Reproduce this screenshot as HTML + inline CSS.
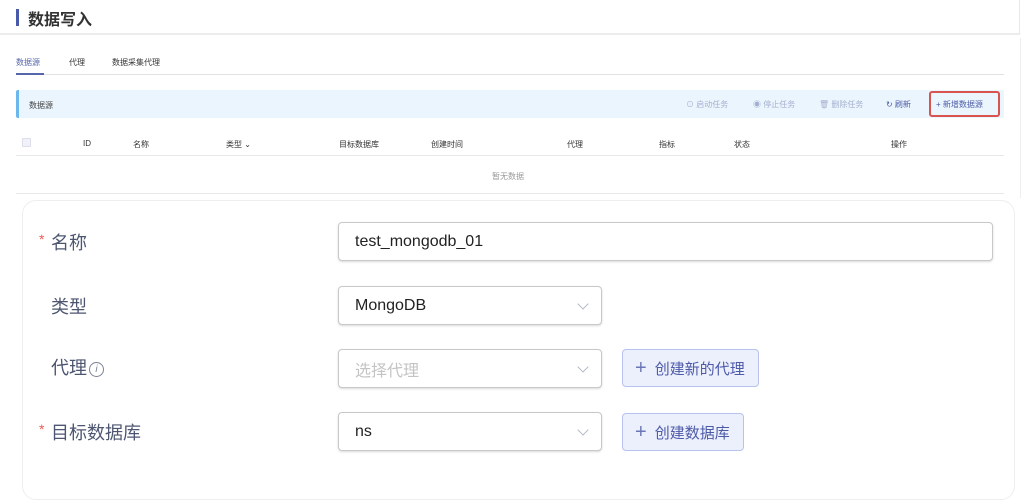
<!DOCTYPE html>
<html><head><meta charset="utf-8"><style>
*{margin:0;padding:0;box-sizing:border-box}
body{width:1024px;height:483px;background:#fff;position:relative;overflow:hidden;font-family:"Liberation Sans","Noto Sans CJK SC",sans-serif;color:#333}
.a{position:absolute;white-space:nowrap}
.s{font-size:8px;color:#333}
.inp{position:absolute;border:1.5px solid #c8c8c8;border-radius:4px;background:#fff;font-size:16px;color:#222;padding-left:16px;display:flex;align-items:center;box-shadow:0 1px 2px rgba(0,0,0,.15)}
.lab{position:absolute;font-size:18px;color:#4d5670}
.star{color:#f05a5a;font-size:14px;position:absolute}
.chev{position:absolute;right:14px;top:50%;width:8px;height:8px;border-right:1.3px solid #b5bac6;border-bottom:1.3px solid #b5bac6;transform:translateY(-75%) rotate(45deg)}
.btn{position:absolute;border:1.5px solid #b9c2ee;background:#eceffc;border-radius:4px;color:#4d5aa8;font-size:15px;display:flex;align-items:center;padding-left:12px}
.btn b{font-weight:normal;font-size:20px;margin-right:8px;color:#6b76b8;line-height:1}
</style></head><body>
<div class="a" style="left:0;top:0;width:1020px;height:35px;border-bottom:2px solid #ececec;border-right:1px solid #e8e8e8"></div>
<div class="a" style="left:16px;top:9px;width:3px;height:17px;background:#4a5aaa"></div>
<div class="a" style="left:28px;top:6px;font-size:16px;font-weight:bold;color:#333">数据写入</div>
<div class="a" style="left:1020px;top:38px;width:1px;height:160px;background:#eee"></div>
<div class="a s" style="left:16px;top:57px;color:#5566aa">数据源</div>
<div class="a s" style="left:69px;top:57px">代理</div>
<div class="a s" style="left:112px;top:57px">数据采集代理</div>
<div class="a" style="left:16px;top:74px;width:988px;height:1px;background:#e2e2e2"></div>
<div class="a" style="left:16px;top:73px;width:28px;height:2px;background:#5566aa"></div>
<div class="a" style="left:16px;top:90px;width:988px;height:28px;background:#eaf5fd;border-left:3px solid #6cb8ec;border-radius:2px"></div>
<div class="a s" style="left:29px;top:100px;color:#444">数据源</div>
<div class="a s" style="left:686px;top:99px;color:#a6b0d0">⊙ 启动任务</div>
<div class="a s" style="left:753px;top:99px;color:#a6b0d0">◉ 停止任务</div>
<div class="a s" style="left:819px;top:99px;color:#a6b0d0">🗑 删除任务</div>
<div class="a s" style="left:886px;top:99px;color:#4d5aa8">↻ 刷新</div>
<div class="a" style="left:929px;top:91px;width:71px;height:26px;border:2px solid #d9534f;border-radius:3px"></div>
<div class="a s" style="left:936px;top:99px;color:#4d5aa8">+ 新增数据源</div>
<div class="a" style="left:22px;top:138px;width:9px;height:9px;border:1px solid #dde;background:#f0f2f8;border-radius:1px"></div>
<div class="a s" style="left:83px;top:139px">ID</div>
<div class="a s" style="left:133px;top:139px">名称</div>
<div class="a s" style="left:226px;top:139px">类型 ⌄</div>
<div class="a s" style="left:339px;top:139px">目标数据库</div>
<div class="a s" style="left:431px;top:139px">创建时间</div>
<div class="a s" style="left:567px;top:139px">代理</div>
<div class="a s" style="left:659px;top:139px">指标</div>
<div class="a s" style="left:734px;top:139px">状态</div>
<div class="a s" style="left:891px;top:139px">操作</div>
<div class="a" style="left:16px;top:155px;width:988px;height:1px;background:#e8e8e8"></div>
<div class="a s" style="left:492px;top:171px;color:#999">暂无数据</div>
<div class="a" style="left:16px;top:193px;width:988px;height:1px;background:#e8e8e8"></div>
<div class="a" style="left:22px;top:200px;width:993px;height:300px;border:1.5px solid #eee;border-radius:14px;background:#fff"></div>
<span class="star" style="left:39px;top:231px">*</span><div class="lab" style="left:51px;top:229px">名称</div>
<div class="inp" style="left:338px;top:222px;width:655px;height:39px">test_mongodb_01</div>
<div class="lab" style="left:51px;top:293px">类型</div>
<div class="inp" style="left:338px;top:286px;width:264px;height:39px">MongoDB<span class="chev"></span></div>
<div class="lab" style="left:51px;top:354px">代理<span style="display:inline-block;width:15px;height:15px;border:1.3px solid #7a8296;border-radius:50%;font-size:10px;font-style:italic;text-align:center;line-height:13px;vertical-align:2px;margin-left:2px;color:#7a8296">i</span></div>
<div class="inp" style="left:338px;top:349px;width:264px;height:39px;color:#c4c4c4">选择代理<span class="chev"></span></div>
<div class="btn" style="left:622px;top:349px;width:137px;height:38px"><b>+</b>创建新的代理</div>
<span class="star" style="left:39px;top:421px">*</span><div class="lab" style="left:51px;top:419px">目标数据库</div>
<div class="inp" style="left:338px;top:412px;width:264px;height:39px">ns<span class="chev"></span></div>
<div class="btn" style="left:622px;top:413px;width:122px;height:38px"><b>+</b>创建数据库</div>
</body></html>
